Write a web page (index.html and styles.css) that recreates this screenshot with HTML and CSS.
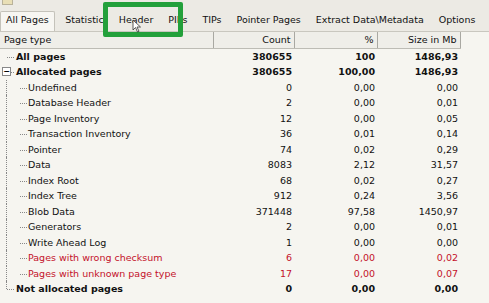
FILE: index.html
```html
<!DOCTYPE html>
<html lang="en">
<head>
    <meta charset="UTF-8">
    <title>Page statistics</title>
    <link rel="stylesheet" href="styles.css">
</head>
<body>
    <div class="window">
        <div class="topbar"><span class="top-icon"></span></div>

        <div class="tabs">
            <span class="tab active">All Pages</span>
            <span class="tab">Statistic</span>
            <span class="tab">Header</span>
            <span class="tab">PIPs</span>
            <span class="tab">TIPs</span>
            <span class="tab">Pointer Pages</span>
            <span class="tab">Extract Data\Metadata</span>
            <span class="tab">Options</span>
        </div>

        <table class="grid">
            <colgroup>
                <col class="w-name">
                <col class="w-num">
                <col class="w-pct">
                <col class="w-size">
                <col>
            </colgroup>
            <thead>
                <tr>
                    <th class="c-name">Page type</th>
                    <th>Count</th>
                    <th>%</th>
                    <th>Size in Mb</th>
                    <th class="c-rest"></th>
                </tr>
            </thead>
            <tbody>
                <tr class="bold">
                    <td class="c-name"><span class="node top">All pages</span></td>
                    <td>380655</td><td>100</td><td>1486,93</td><td></td>
                </tr>
                <tr class="bold">
                    <td class="c-name"><span class="node top open">Allocated pages</span></td>
                    <td>380655</td><td>100,00</td><td>1486,93</td><td></td>
                </tr>
                <tr>
                    <td class="c-name"><span class="node child">Undefined</span></td>
                    <td>0</td><td>0,00</td><td>0,00</td><td></td>
                </tr>
                <tr>
                    <td class="c-name"><span class="node child">Database Header</span></td>
                    <td>2</td><td>0,00</td><td>0,01</td><td></td>
                </tr>
                <tr>
                    <td class="c-name"><span class="node child">Page Inventory</span></td>
                    <td>12</td><td>0,00</td><td>0,05</td><td></td>
                </tr>
                <tr>
                    <td class="c-name"><span class="node child">Transaction Inventory</span></td>
                    <td>36</td><td>0,01</td><td>0,14</td><td></td>
                </tr>
                <tr>
                    <td class="c-name"><span class="node child">Pointer</span></td>
                    <td>74</td><td>0,02</td><td>0,29</td><td></td>
                </tr>
                <tr>
                    <td class="c-name"><span class="node child">Data</span></td>
                    <td>8083</td><td>2,12</td><td>31,57</td><td></td>
                </tr>
                <tr>
                    <td class="c-name"><span class="node child">Index Root</span></td>
                    <td>68</td><td>0,02</td><td>0,27</td><td></td>
                </tr>
                <tr>
                    <td class="c-name"><span class="node child">Index Tree</span></td>
                    <td>912</td><td>0,24</td><td>3,56</td><td></td>
                </tr>
                <tr>
                    <td class="c-name"><span class="node child">Blob Data</span></td>
                    <td>371448</td><td>97,58</td><td>1450,97</td><td></td>
                </tr>
                <tr>
                    <td class="c-name"><span class="node child">Generators</span></td>
                    <td>2</td><td>0,00</td><td>0,01</td><td></td>
                </tr>
                <tr>
                    <td class="c-name"><span class="node child">Write Ahead Log</span></td>
                    <td>1</td><td>0,00</td><td>0,00</td><td></td>
                </tr>
                <tr class="bad">
                    <td class="c-name"><span class="node child">Pages with wrong checksum</span></td>
                    <td>6</td><td>0,00</td><td>0,02</td><td></td>
                </tr>
                <tr class="bad">
                    <td class="c-name"><span class="node child">Pages with unknown page type</span></td>
                    <td>17</td><td>0,00</td><td>0,07</td><td></td>
                </tr>
                <tr class="bold">
                    <td class="c-name"><span class="node top last-top">Not allocated pages</span></td>
                    <td>0</td><td>0,00</td><td>0,00</td><td></td>
                </tr>
            </tbody>
        </table>

        <!-- highlight drawn over the Header tab -->
        <div class="highlight"></div>
        <svg class="cursor" width="10" height="14" viewBox="0 0 10 14">
            <path d="M1 1 L1 11 L3.5 8.5 L5.5 13 L7 12.3 L5 8 L8.5 8 Z" fill="#fff" stroke="#333" stroke-width="0.8"/>
        </svg>
    </div>
</body>
</html>
```

FILE: styles.css
```css
body {
    margin: 0;
    font-family: "DejaVu Sans", Tahoma, sans-serif;
    font-size: 9.5px;
    color: #111;
    background: #f6f5f0;
}
.window {
    position: relative;
    width: 489px;
    height: 303px;
    overflow: hidden;
    background: #f6f5f0;
}
.topbar {
    height: 8px;
    background: #eceae4;
}
.top-icon {
    display: block;
    margin-left: 2px;
    width: 9px;
    height: 4px;
    border: 1px solid #b9b29a;
    border-top: none;
    background: #e9dfb6;
}
.tabs {
    display: flex;
    align-items: flex-end;
    height: 23px;
    background: #eceae4;
    border-bottom: 1px solid #c9c7bf;
}
.tab {
    padding: 0 7.5px 4px;
    line-height: 14px;
    white-space: nowrap;
}
.tab.active {
    background: #f7f6f2;
    border: 1px solid #c4c2ba;
    border-bottom: none;
    border-radius: 2px 2px 0 0;
    padding: 1px 5px 4px;
    margin-right: 3px;
}
.grid {
    border-collapse: collapse;
    width: 489px;
    table-layout: fixed;
}
.w-name { width: 213px; }
.w-num { width: 81px; }
.w-pct { width: 83px; }
.w-size { width: 83px; }
.grid th,
.grid td {
    box-sizing: border-box;
    white-space: nowrap;
    text-align: right;
}
.grid th {
    font-weight: normal;
    height: 16px;
    padding: 0 3px 0 4px;
    background: #efeee9;
    border-right: 1px solid #a9a8a2;
    border-bottom: 1px solid #bdbcb5;
}
.grid th.c-name { text-align: left; }
.grid th.c-rest {
    background: #f6f5f0;
    border: none;
}
.grid td {
    height: 15.5px;
    padding: 0 2px 0 4px;
}
.grid td.c-name {
    text-align: left;
    padding: 0;
}
.bold td { font-weight: bold; }
.bad td { color: #c4112a; }

/* tree lines */
.node {
    position: relative;
    display: block;
    line-height: 15.5px;
}
.node.top { padding-left: 16px; }
.node.child { padding-left: 28px; }
.node::before {
    content: "";
    position: absolute;
    top: 8px;
    border-top: 1px dotted #888;
}
.node.top::before { left: 7px; width: 7px; }
.node.child::before { left: 20px; width: 7px; }
.node.child::after {
    content: "";
    position: absolute;
    left: 6px;
    top: 0;
    height: 100%;
    border-left: 1px dotted #888;
}
.node.open::after {
    content: "−";
    position: absolute;
    left: 2px;
    top: 3px;
    width: 7px;
    height: 7px;
    border: 1px solid #888;
    background: #fff;
    font-size: 8px;
    line-height: 7px;
    text-align: center;
    font-weight: bold;
    color: #000;
}
.node.open::before { left: 11px; width: 3px; }
.node.last-top::after {
    content: "";
    position: absolute;
    left: 6px;
    top: 0;
    height: 8px;
    border-left: 1px dotted #888;
}

.highlight {
    position: absolute;
    left: 103px;
    top: 2px;
    width: 70px;
    height: 25px;
    border: 5px solid #23a03b;
    border-radius: 2px;
}
.cursor {
    position: absolute;
    left: 132px;
    top: 19px;
}
```
